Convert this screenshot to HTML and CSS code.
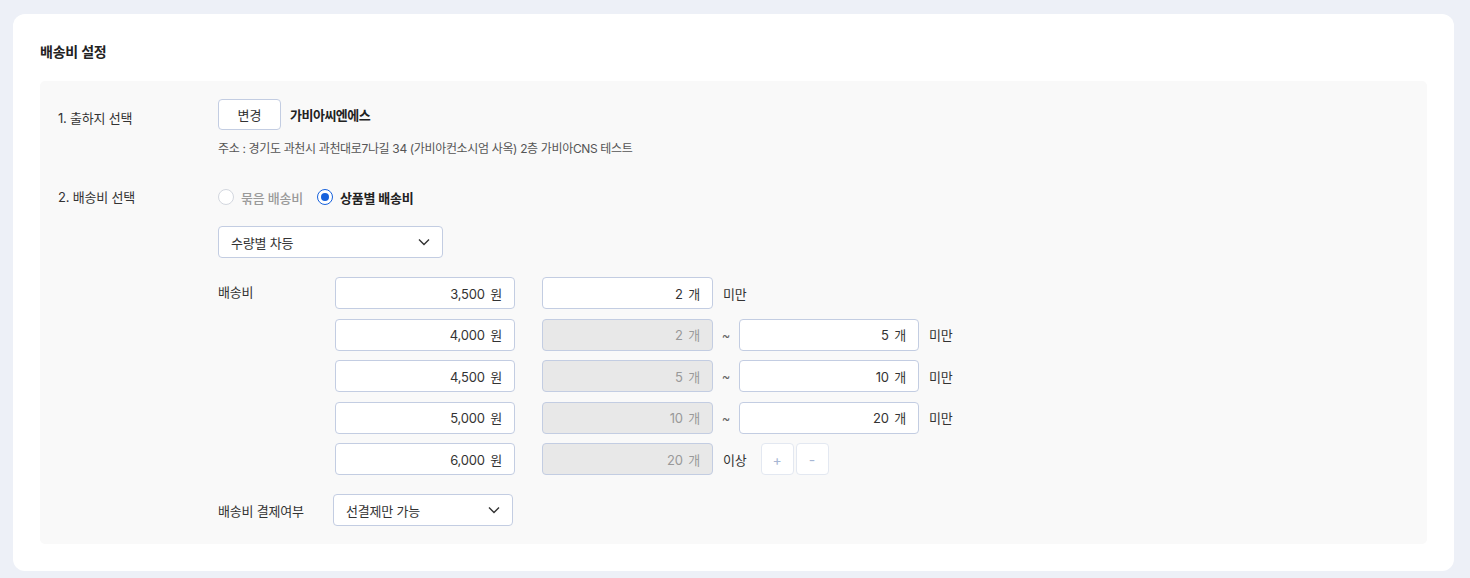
FILE: index.html
```html
<!DOCTYPE html>
<html lang="ko">
<head>
<meta charset="utf-8">
<link rel="stylesheet" href="styles.css">
</head>
<body>
<div class="card">
  <h2 class="title">배송비 설정</h2>
  <div class="panel">
    <div class="row row-origin">
      <div class="label">1. 출하지 선택</div>
      <div class="content">
        <div class="origin-top">
          <button class="btn">변경</button>
          <span class="origin-name">가비아씨엔에스</span>
        </div>
        <div class="address">주소 : 경기도 과천시 과천대로7나길 34 (가비아컨소시엄 사옥) 2층 가비아CNS 테스트</div>
      </div>
    </div>
    <div class="row row-fee">
      <div class="label">2. 배송비 선택</div>
      <div class="content">
        <div class="radios">
          <label class="radio"><span class="dot"></span><span class="radio-text off">묶음 배송비</span></label>
          <label class="radio on"><span class="dot"></span><span class="radio-text">상품별 배송비</span></label>
        </div>
        <div class="select sel-type"><span>수량별 차등</span><svg class="chev" viewBox="0 0 12 8" width="12" height="8"><path d="M1 1.5l5 5 5-5" fill="none" stroke="#333" stroke-width="1.4"/></svg></div>
        <div class="fees">
          <div class="fee-label">배송비</div>
          <div class="fee-rows">
            <div class="fee-row">
              <div class="inp w-price">3,500 원</div>
              <div class="inp w-qty">2 개</div>
              <span class="suffix">미만</span>
            </div>
            <div class="fee-row">
              <div class="inp w-price">4,000 원</div>
              <div class="inp w-qty dis">2 개</div>
              <span class="tilde">~</span>
              <div class="inp w-to">5 개</div>
              <span class="suffix">미만</span>
            </div>
            <div class="fee-row">
              <div class="inp w-price">4,500 원</div>
              <div class="inp w-qty dis">5 개</div>
              <span class="tilde">~</span>
              <div class="inp w-to">10 개</div>
              <span class="suffix">미만</span>
            </div>
            <div class="fee-row">
              <div class="inp w-price">5,000 원</div>
              <div class="inp w-qty dis">10 개</div>
              <span class="tilde">~</span>
              <div class="inp w-to">20 개</div>
              <span class="suffix">미만</span>
            </div>
            <div class="fee-row">
              <div class="inp w-price">6,000 원</div>
              <div class="inp w-qty dis">20 개</div>
              <span class="suffix">이상</span>
              <div class="pm">
                <button class="pm-btn">+</button>
                <button class="pm-btn">-</button>
              </div>
            </div>
          </div>
        </div>
        <div class="pay">
          <div class="pay-label">배송비 결제여부</div>
          <div class="select sel-pay"><span>선결제만 가능</span><svg class="chev" viewBox="0 0 12 8" width="12" height="8"><path d="M1 1.5l5 5 5-5" fill="none" stroke="#333" stroke-width="1.4"/></svg></div>
        </div>
      </div>
    </div>
  </div>
</div>
</body>
</html>
```

FILE: styles.css
```css
* { box-sizing: border-box; }
html, body { margin: 0; padding: 0; }
body {
  background: #edf0f7;
  padding: 14px 16px 7px 13px;
  font-family: "Inter", "Noto Sans CJK KR", sans-serif;
  font-size: 13px;
  letter-spacing: -0.2px;
  color: #333;
}
.card {
  background: #fff;
  border-radius: 12px;
  padding: 28px 27px 27px 27px;
}
.title {
  margin: 0 0 19px 0;
  font-size: 14px;
  line-height: 20px;
  font-weight: 700;
  color: #222;
}
.panel {
  background: #f9f9f9;
  border-radius: 5px;
  padding: 18px 18px 18px 18px;
  display: flex;
  flex-direction: column;
  gap: 30px;
}
.row { display: flex; }
.label {
  width: 160px;
  flex: none;
  font-size: 13px;
  color: #333;
}
.row-origin .label { padding-top: 10px; line-height: 18px; }
.row-fee .label { line-height: 18px; }
.content { display: flex; flex-direction: column; }
.origin-top { display: flex; align-items: center; gap: 9px; }
.btn {
  width: 63px;
  height: 31px;
  border: 1px solid #c3cde2;
  border-radius: 4px;
  background: #fff;
  font: inherit;
  font-size: 13px;
  color: #333;
  padding: 0;
}
.origin-name { font-weight: 700; font-size: 13px; color: #222; letter-spacing: -0.5px; }
.address {
  margin-top: 10px;
  line-height: 18px;
  font-size: 12px;
  letter-spacing: -0.35px;
  color: #555;
}
.radios { display: flex; gap: 14px; height: 18px; align-items: center; }
.radio { display: flex; align-items: center; gap: 7px; }
.dot {
  width: 16px; height: 16px;
  border-radius: 50%;
  border: 1px solid #d3d7df;
  background: #fff;
  display: inline-block;
  position: relative;
}
.radio.on .dot { border: 1.5px solid #1661dc; }
.radio.on .dot::after {
  content: "";
  position: absolute;
  left: 2.5px; top: 2.5px;
  width: 8px; height: 8px;
  border-radius: 50%;
  background: #1661dc;
}
.radio-text { font-weight: 700; color: #222; font-size: 13px; }
.radio-text.off { font-weight: 500; color: #999; }
.select {
  height: 32px;
  border: 1px solid #c3cde2;
  border-radius: 4px;
  background: #fff;
  display: flex;
  align-items: center;
  justify-content: space-between;
  padding: 0 12px 0 12px;
  color: #333;
}
.sel-type { width: 225px; margin-top: 20px; }
.chev { display: block; }
.fees { display: flex; margin-top: 19px; }
.fee-label { width: 117px; flex: none; line-height: 32px; margin-top: -1px; }
.fee-rows { display: flex; flex-direction: column; gap: 9.5px; }
.fee-row { display: flex; align-items: center; height: 32px; }
.inp {
  height: 32px;
  border: 1px solid #c3cde2;
  border-radius: 4px;
  background: #fff;
  display: flex;
  align-items: center;
  justify-content: flex-end;
  padding-right: 12px;
  color: #333;
  font-size: 13px;
  word-spacing: 2px;
}
.inp.dis { background: #e8e8e8; color: #999; }
.w-price { width: 180px; margin-right: 27px; }
.w-qty { width: 171px; }
.w-to { width: 180px; }
.tilde { width: 26px; text-align: center; color: #666; }
.suffix { margin-left: 10px; color: #333; }
.pm { display: flex; gap: 2px; margin-left: 14px; }
.pm-btn {
  width: 33px; height: 32px;
  border: 1px solid #e3e8f1;
  border-radius: 4px;
  background: #fff;
  color: #a7b6d3;
  font: inherit;
  font-size: 14px;
  padding: 0;
}
.pay { display: flex; align-items: center; margin-top: 19px; }
.pay-label { width: 115px; flex: none; }
.sel-pay { width: 180px; }
```
